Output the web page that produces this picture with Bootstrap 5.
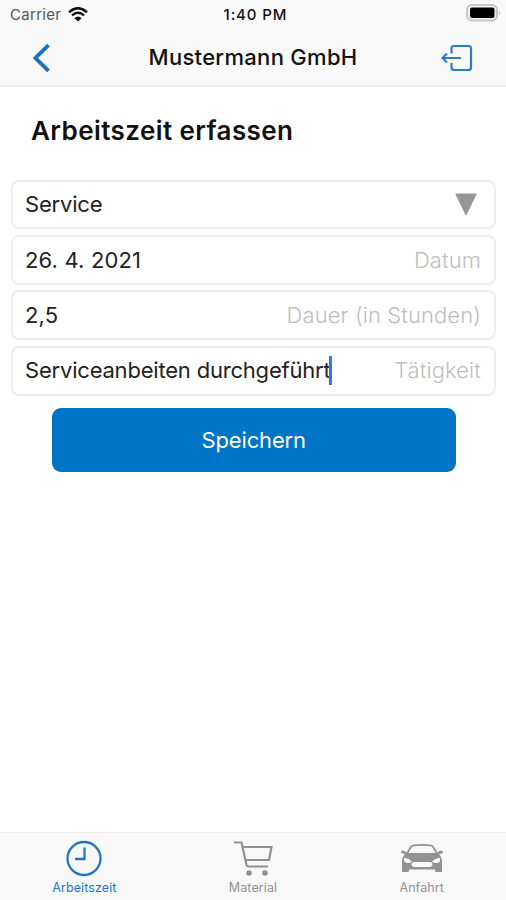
<!DOCTYPE html>
<html lang="de">
<head>
<meta charset="utf-8">
<meta name="viewport" content="width=device-width, initial-scale=1">
<title>Arbeitszeit erfassen</title>
<link href="https://cdn.jsdelivr.net/npm/bootstrap@5.3.0/dist/css/bootstrap.min.css" rel="stylesheet">
<style>
  body { font-family: Inter, "Liberation Sans", sans-serif; color: #111; }
  .screen { height: 900px; overflow: hidden; }
  .top-area { height: 87px; background: #f9f9f9; border-bottom: 2px solid #efefef; }
  .status { height: 29px; font-size: 15px; line-height: 29px; padding: 0 5px 0 10px; }
  .status .carrier { color: #555; letter-spacing: .3px; }
  .wifi { margin-left: 7px; }
  .status .clock { font-weight: 500; font-size: 15px; letter-spacing: .9px; color: #111; }
  .title-bar { height: 56px; padding: 0 33px; }
  .title-bar h1 { font-size: 22px; font-weight: 500; line-height: 57px; letter-spacing: .3px; }
  .page-title { font-size: 26px; font-weight: 600; line-height: 32px; padding: 28px 0 0 31px; height: 92.5px; letter-spacing: .42px; }
  .fields { padding: 0 10px 0 11px; gap: 5.5px; }
  .field { height: 50px; border: 2px solid #ededed; border-radius: 8px; padding: 0 13px 0 12px; font-size: 22px; line-height: 46px; letter-spacing: -.2px; color: #222; background: #fff; }
  .field.select-field { height: 49.5px; line-height: 45px; }
  .field.active-field { line-height: 45px; }
  .field .numeric { letter-spacing: .15px; }
  .field .hint { color: #bebebe; font-weight: 300; letter-spacing: .1px; }
  .caret { width: 3px; height: 29px; margin-left: -2px; background: #2b7bee; }
  .btn-save { --bs-btn-bg: #0075c6; --bs-btn-color: #fff; --bs-btn-hover-bg: #0069b3; --bs-btn-hover-color: #fff; height: 64px; margin: 12.5px 50.5px 0 52px; border: 0; border-radius: 9px; font-size: 22px; letter-spacing: -.15px; }
  .tabs { height: 68px; background: #f8f8f8; border-top: 1px solid #ececec; font-size: 12.5px; color: #929292; padding-top: 7px; }
  .tabs a { color: inherit; line-height: 16px; letter-spacing: .1px; }
  .tabs a.current { color: #2176c4; }
  .tabs svg { margin-bottom: 2px; }
</style>
</head>
<body>
<div class="screen d-flex flex-column bg-white">
  <header class="top-area flex-shrink-0">
    <div class="status row g-0">
      <div class="col d-flex align-items-center">
        <span class="carrier">Carrier</span>
        <svg class="wifi" width="20" height="15" viewBox="0 0 20 15" fill="none" stroke="#111" stroke-width="2.5"><path d="M1 5.2Q10-2.8 19 5.2M4 8.4Q10 3.2 16 8.4"/><path d="M6.4 11.2Q10 8 13.6 11.2L10 14.6Z" fill="#111" stroke="none"/></svg>
      </div>
      <div class="col-auto clock">1:40 PM</div>
      <div class="col d-flex align-items-start justify-content-end pt-1">
        <svg width="35" height="18" viewBox="0 0 35 18"><rect x="1" y="1" width="30" height="15.500" rx="5" fill="#f4f4f4" stroke="#c6c6c6" stroke-width="2"/><rect x="4" y="3.500" width="24.500" height="10.500" rx="2" fill="#000"/><path d="M33 6.500q2 2.500 0 5z" fill="#bbb"/></svg>
      </div>
    </div>
    <nav class="title-bar row g-0 align-items-center" aria-label="Navigation">
      <div class="col d-flex"><svg width="18" height="30" viewBox="0 0 18 30" fill="none" stroke="#1670c0" stroke-width="3.8"><path d="M15.500 2.200 2.400 15l13.100 12.800"/></svg></div>
      <h1 class="col-auto m-0">Mustermann GmbH</h1>
      <div class="col d-flex justify-content-end"><svg width="32" height="28" viewBox="0 0 32 28" fill="none" stroke="#2f7ac5" stroke-width="2.200"><path d="M10.500 9.500V4.500q0-2.500 2.500-2.500h14.500q2.500 0 2.500 2.500v19q0 2.500-2.500 2.500H13q-2.500 0-2.500-2.500V19M20 14H2M6 9.500 1.500 14l4.500 4.500"/></svg></div>
    </nav>
  </header>
  <main class="flex-grow-1">
    <h2 class="page-title m-0">Arbeitszeit erfassen</h2>
    <form class="fields d-flex flex-column">
      <div class="field select-field d-flex justify-content-between align-items-center"><span>Service</span><svg class="me-1" width="22" height="23" viewBox="0 0 22 23"><path d="M.800 1h20.400L11 22z" fill="#969696" stroke="#969696"/></svg></div>
      <div class="field d-flex justify-content-between"><span class="numeric">26. 4. 2021</span><span class="hint">Datum</span></div>
      <div class="field d-flex justify-content-between"><span class="numeric">2,5</span><span class="hint">Dauer (in Stunden)</span></div>
      <div class="field active-field d-flex justify-content-between"><span class="d-flex align-items-center"><span class="activity">Serviceanbeiten durchgeführt</span><span class="caret"></span></span><span class="hint">Tätigkeit</span></div>
    </form>
    <div class="d-grid"><button type="button" class="btn btn-save">Speichern</button></div>
  </main>
  <footer class="tabs row g-0 flex-shrink-0 text-center">
    <div class="col"><a class="current d-flex flex-column align-items-center text-decoration-none" href="#">
      <svg width="38" height="38" viewBox="0 0 38 38" fill="none" stroke="currentColor" stroke-width="2.300"><circle cx="19" cy="18.500" r="16.500"/><path d="M19.500 7.500v11.500H10"/></svg>Arbeitszeit</a></div>
    <div class="col"><a class="d-flex flex-column align-items-center text-decoration-none" href="#">
      <svg width="40" height="38" viewBox="0 0 40 38" fill="none" stroke="currentColor" stroke-width="2.200"><path d="M1 2.500h7.500l5 22.500q.5 1.500 2 1.500H35M9.500 7h29L36 20H12.500"/><circle cx="16" cy="33" r="2.800" fill="currentColor" stroke="none"/><circle cx="32" cy="33" r="2.800" fill="currentColor" stroke="none"/></svg>Material</a></div>
    <div class="col"><a class="d-flex flex-column align-items-center text-decoration-none" href="#">
      <svg width="44" height="38" viewBox="0 0 44 38"><path d="M7 13.500 10.500 7.500q1-2 3-2.200Q22 4.500 30.500 5.300q2 .2 3 2.200L37 13.500" fill="none" stroke="currentColor" stroke-width="1.800"/><path d="M1 12q0-1.500 2-1.500t4 2.500h30q2-2.500 4-2.500t2 1.500-4 2q3 3 3 8v9q0 1-1 1h-5q-1 0-1-2.500H9Q9 32 8 32H3q-1 0-1-1v-9q0-5 3-8-4-.500-4-2z" fill="currentColor"/><path d="M4 18q5 0 8 4-6 2-8-.500zM40 18q-5 0-8 4 6 2 8-.500zM14 22h16q2 0 2.500 2t-2 3h-17q-2.500-1-2-3t2.500-2z" fill="#f8f8f8"/></svg>Anfahrt</a></div>
  </footer>
</div>
<script src="https://cdn.jsdelivr.net/npm/bootstrap@5.3.0/dist/js/bootstrap.bundle.min.js"></script>
</body>
</html>
